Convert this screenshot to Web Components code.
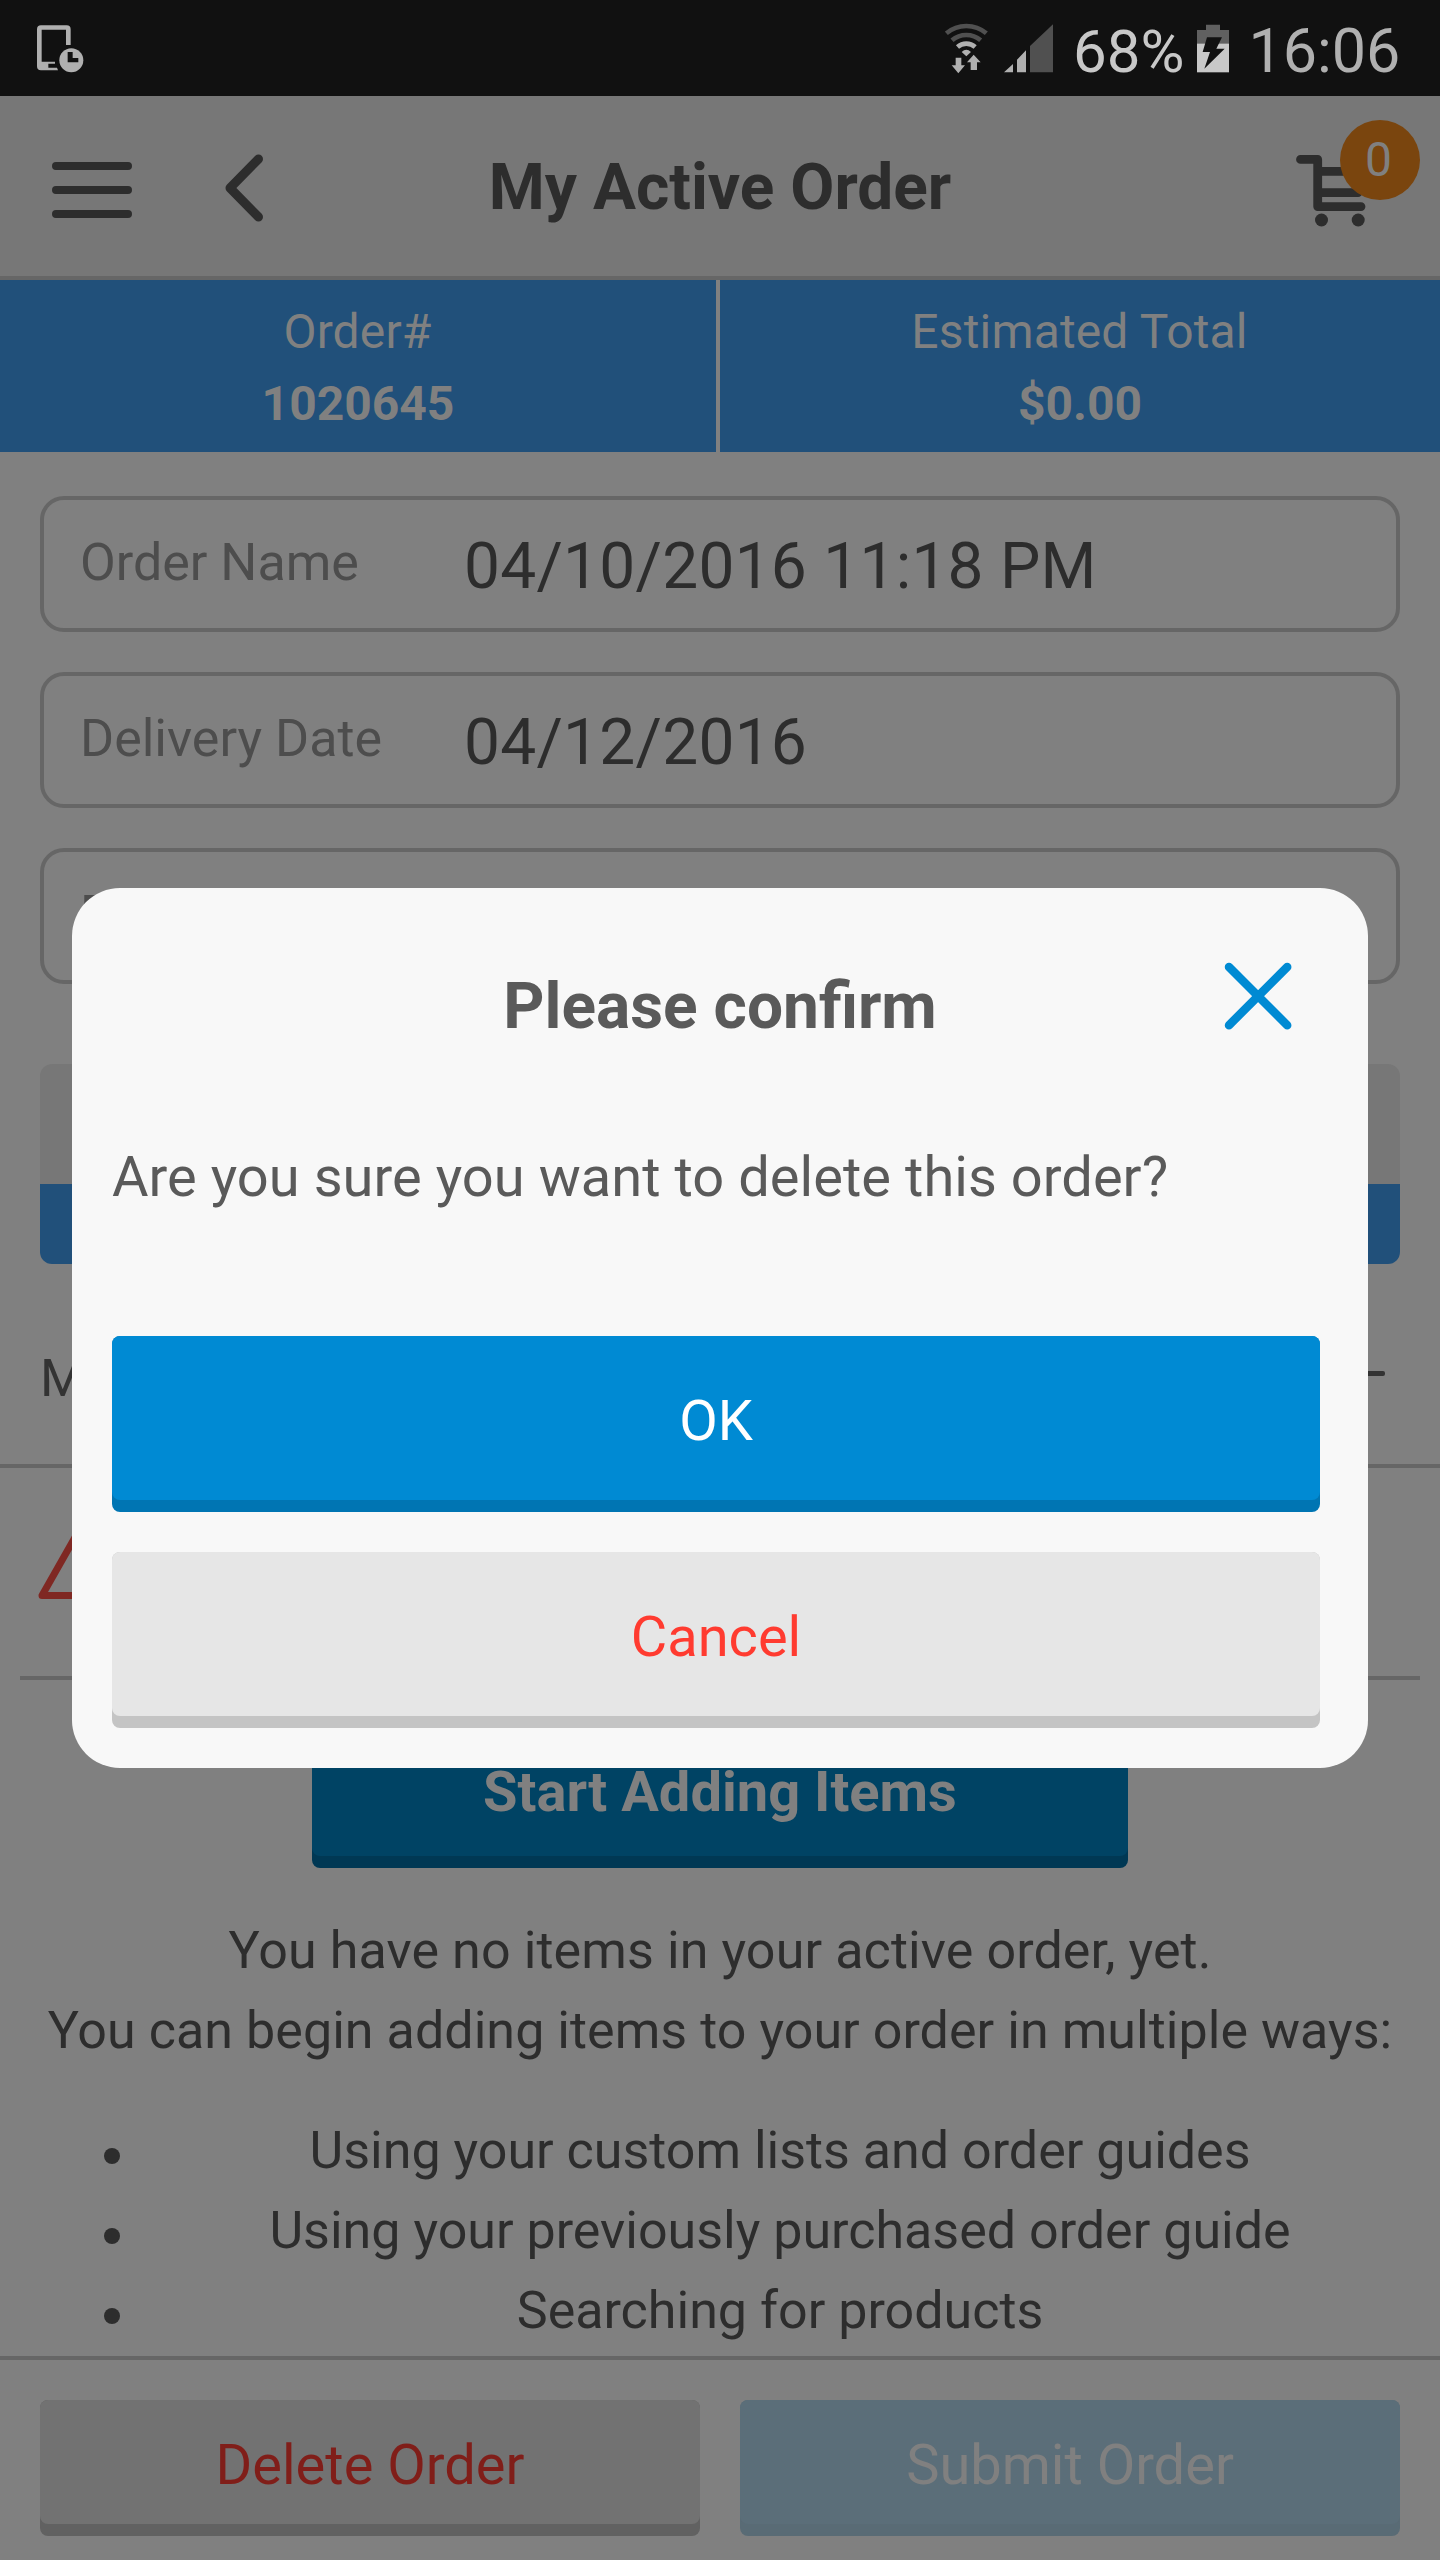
<!DOCTYPE html>
<html lang="en">
<head>
<meta charset="utf-8">
<title>My Active Order</title>
<style>
  html, body { margin: 0; padding: 0; }
  body { width: 1440px; height: 2560px; overflow: hidden; background: #808080; font-family: Roboto, "Noto Sans", sans-serif; }
</style>
</head>
<body>
<order-app></order-app>
<script>
const define = (name, html) => customElements.define(name, class extends HTMLElement {
  constructor() {
    super();
    const t = document.createElement('template');
    t.innerHTML = '<style>*{box-sizing:border-box}:host{box-sizing:border-box}svg{display:block;flex:none}</style>' + html;
    this.attachShadow({ mode: 'open' }).append(t.content.cloneNode(true));
  }
});

define('status-bar', `
<style>
  :host { display: flex; align-items: center; height: 96px; background: #111; padding: 0 39.7px 0 37px; white-space: nowrap; }
  .device { margin-right: auto; }
  .signal { margin: 0 20px 0 16px; }
  .pct, .time { line-height: 89px; padding-top: 7px; }
  .pct { font-size: 60px; color: #c8c8c8; }
  .battery { margin: 0 19.4px 0 12.7px; }
  .time { font-size: 61px; color: #b0b0b0; }
</style>
<svg class="device" width="46.67" height="53.33" viewBox="111 64 140 160" fill="#b0b0b0">
  <path d="M123 77H200Q212 77 212 89V136H198V90H125V186H165V192H145V204H171L174 212H123Q111 212 111 200V89Q111 77 123 77Z"/>
  <circle cx="214" cy="182" r="36"/>
  <path fill="#111" d="M203 157H218V175H235V188H203Z"/>
</svg>
<svg width="42.67" height="53.33" viewBox="76 64 128 160" fill="none" stroke-width="14">
  <path stroke="#505050" d="M80 101A93 93 0 0 1 200 101M97 122A66 66 0 0 1 183 122"/>
  <path stroke="#b0b0b0" d="M113.500 142A40 40 0 0 1 166.500 142"/>
  <path fill="#b0b0b0" stroke="none" d="M126 157Q140 144 154 157L140 170ZM108 174H125V197H136L116 221L96 197H108ZM162 165L183 188H172V211H153V188H142Z"/>
</svg>
<svg class="signal" width="49" height="53.33" viewBox="252 64 147 160" fill="#b0b0b0">
  <path d="M252 218L279 193V218ZM291 218V180L318 152V218Z"/>
  <path fill="#505050" d="M330 218V139L399 74V218Z"/>
</svg>
<span class="pct">68%</span>
<svg class="battery" width="32" height="53.33" viewBox="831 64 96 160">
  <path fill="#606060" d="M858 75H900V91H927V133H831V91H858Z"/>
  <path fill="#c8c8c8" d="M831 132H927V218H831Z"/>
  <path fill="#111" d="M861 113H906L889 147H914L853 207L870 157H848Z"/>
</svg>
<span class="time">16:06</span>`);

define('app-header', `
<style>
  :host { display: grid; grid-template-columns: 1fr auto 1fr; align-items: center; height: 184px; background: #777; border-bottom: 4px solid #666; color: #2d2d2d; }
  .left { display: flex; align-items: center; gap: 93px; padding-left: 52px; }
  .title { font-size: 64px; font-weight: 700; line-height: 80px; padding-top: 3px; white-space: nowrap; }
  .cart { position: relative; justify-self: end; width: 144px; height: 180px; }
  .badge { position: absolute; left: 44px; top: 24px; width: 80px; height: 80px; border-radius: 50%; background: #7a450e; color: #808080; font-size: 48px; line-height: 80px; text-align: center; padding-right: 3px; }
</style>
<div class="left">
  <svg width="80" height="68" viewBox="0 0 80 68" fill="none" stroke="#2d2d2d" stroke-width="8" stroke-linecap="round"><path d="M4 14H76M4 38H76M4 62H76"/></svg>
  <svg width="40" height="72" viewBox="0 0 40 72" fill="none" stroke="#2d2d2d" stroke-width="9" stroke-linecap="round" stroke-linejoin="round"><path d="M33.500 9L5 38L33.500 67"/></svg>
</div>
<div class="title">My Active Order</div>
<div class="cart">
  <svg width="144" height="180" viewBox="1296 96 144 180" fill="none" stroke="#2d2d2d" stroke-width="8.8" stroke-linecap="round" stroke-linejoin="round">
    <path d="M1300.500 159.400H1317.700V206.600H1361M1317.700 171.400H1371M1317.700 192.700H1358"/>
    <g fill="#2d2d2d" stroke="none"><circle cx="1321.500" cy="220" r="6.500"/><circle cx="1358.200" cy="220" r="6.500"/></g>
  </svg>
  <div class="badge">0</div>
</div>`);

define('summary-cell', `
<style>
  :host { display: block; flex: 1; background: #21507a; padding: 16px 0 12px; text-align: center; font-size: 48px; line-height: 72px; color: #808080; }
  .label { letter-spacing: .15px; margin-left: -1px; }
  .value { font-weight: 700; }
</style>
<div class="label"><slot name="label"></slot></div><div class="value"><slot></slot></div>`);

define('form-field', `
<style>
  :host { display: flex; align-items: center; height: 136px; border: 4px solid #666; border-radius: 24px; padding: 0 36px; white-space: nowrap; }
  .label { width: 384px; font-size: 52px; color: #4d4d4d; padding-bottom: 3px; }
  .value { font-size: 64px; letter-spacing: .25px; color: #2d2d2d; padding-top: 4px; }
</style>
<div class="label"><slot name="label"></slot></div><div class="value"><slot></slot></div>`);

define('push-button', `
<style>
  :host { display: flex; align-items: center; justify-content: center; height: var(--h, 176px); padding: var(--drop, 6px) 0 12px; border-radius: 8px; background: var(--edge); font-size: 56px; line-height: 66px; position: relative; color: var(--ink); font-weight: var(--weight, 400); white-space: nowrap; isolation: isolate; }
  .face { position: absolute; z-index: -1; inset: 0 0 12px; border-radius: 8px; background: var(--face); }
</style>
<div class="face"></div><slot></slot>`);

define('bullet-item', `
<style>
  :host { display: flex; align-items: center; height: 80px; }
  .dot { width: 16px; height: 16px; border-radius: 50%; background: #2d2d2d; margin: 11px 40px 0 64px; }
  .text { flex: 1; text-align: center; line-height: 80px; padding-top: 2px; white-space: nowrap; }
</style>
<div class="dot"></div><div class="text"><slot></slot></div>`);

define('confirm-dialog', `
<style>
  :host { display: flex; flex-direction: column; width: 1296px; height: 880px; border-radius: 48px; background: #f8f8f8; padding: 0 48px 40px 40px; color: #5a5a5a; }
  .head { display: grid; grid-template-columns: 1fr auto 1fr; align-items: center; height: 236px; margin-right: -8px; }
  .title { grid-column: 2; font-size: 64px; font-weight: 700; line-height: 80px; padding-top: 2px; }
  .close { justify-self: end; margin: 0 36px 21px 0; }
  .message { font-size: 56px; line-height: 80px; height: 212px; padding-top: 13px; letter-spacing: .04px; white-space: nowrap; }
  .actions { display: flex; flex-direction: column; gap: 40px; }
  .ok { --face: #008ad3; --edge: #0075b3; --ink: #fff; }
  .cancel { --face: #e6e6e6; --edge: #c4c4c4; --ink: #ff3b30; }
</style>
<div class="head">
  <div class="title">Please confirm</div>
  <svg class="close" width="68" height="68" viewBox="0 0 68 68" fill="none" stroke="#008ad3" stroke-width="8.500" stroke-linecap="round"><path d="M5 5L63.200 63.200M63.200 5L5 63.200"/></svg>
</div>
<div class="message">Are you sure you want to delete this order?</div>
<div class="actions">
  <push-button class="ok">OK</push-button>
  <push-button class="cancel">Cancel</push-button>
</div>`);

define('order-app', `
<style>
  :host { display: flex; flex-direction: column; position: relative; width: 1440px; height: 2560px; overflow: hidden; background: #808080; color: #2d2d2d; }
  .summary { display: flex; gap: 4px; }
  .summary summary-cell:first-child { flex: none; width: 716px; }
  .fields { display: flex; flex-direction: column; gap: 40px; padding: 44px 40px 0; }
  .panel { margin: 80px 40px 0; height: 200px; border-radius: 12px; background: linear-gradient(#777 120px, #21507a 120px); }
  .section { display: flex; align-items: center; justify-content: space-between; margin-top: 28px; height: 176px; padding: 0 55px 0 40px; border-bottom: 4px solid #666; font-size: 52px; color: #333; }
  .minus { width: 44px; height: 5px; border-radius: 2px; background: #333; margin-bottom: 9px; }
  .alert { height: 212px; margin: 0 20px; border-bottom: 4px solid #666; padding: 51px 0 0 18px; }
  .start { width: 816px; margin: 36px auto 0; --h: 152px; --drop: 12px; --face: #004364; --edge: #003854; --ink: #808080; --weight: 700; }
  .hint { margin-top: 43px; margin-bottom: -1px; text-align: center; font-size: 52px; line-height: 80px; white-space: nowrap; }
  .hint .a { letter-spacing: .11px; }
  .hint .b { letter-spacing: .05px; }
  .ways { padding: 40px 40px 0; font-size: 52px; }
  .footer { display: flex; gap: 40px; margin-top: auto; height: 204px; border-top: 4px solid #666; padding: 40px 40px 0; --h: 136px; }
  .footer push-button { flex: 1; }
  .delete { --face: #727272; --edge: #616161; --ink: #801e19; }
  .submit { --face: #5b6e79; --edge: #596b75; --ink: #808080; }
  confirm-dialog { position: absolute; left: 72px; top: 888px; z-index: 2; }
</style>
<status-bar></status-bar>
<app-header></app-header>
<div class="summary">
  <summary-cell><span slot="label">Order#</span>1020645</summary-cell>
  <summary-cell><span slot="label">Estimated Total</span>$0.00</summary-cell>
</div>
<div class="fields">
  <form-field><span slot="label">Order Name</span>04/10/2016 11:18 PM</form-field>
  <form-field><span slot="label">Delivery Date</span>04/12/2016</form-field>
  <form-field><span slot="label">P</span></form-field>
</div>
<div class="panel"></div>
<div class="section"><span>M</span><div class="minus"></div></div>
<div class="alert">
  <svg width="88" height="84" viewBox="38 1519 88 84" fill="none" stroke="#7f2823" stroke-width="7" stroke-linejoin="round"><path d="M42 1595.500L82 1525L122 1595.500Z"/></svg>
</div>
<push-button class="start">Start Adding Items</push-button>
<div class="hint"><div class="a">You have no items in your active order, yet.</div><div class="b">You can begin adding items to your order in multiple ways:</div></div>
<div class="ways">
  <bullet-item>Using your custom lists and order guides</bullet-item>
  <bullet-item>Using your previously purchased order guide</bullet-item>
  <bullet-item>Searching for products</bullet-item>
</div>
<div class="footer">
  <push-button class="delete">Delete Order</push-button>
  <push-button class="submit">Submit Order</push-button>
</div>
<confirm-dialog></confirm-dialog>`);
</script>
</body>
</html>
